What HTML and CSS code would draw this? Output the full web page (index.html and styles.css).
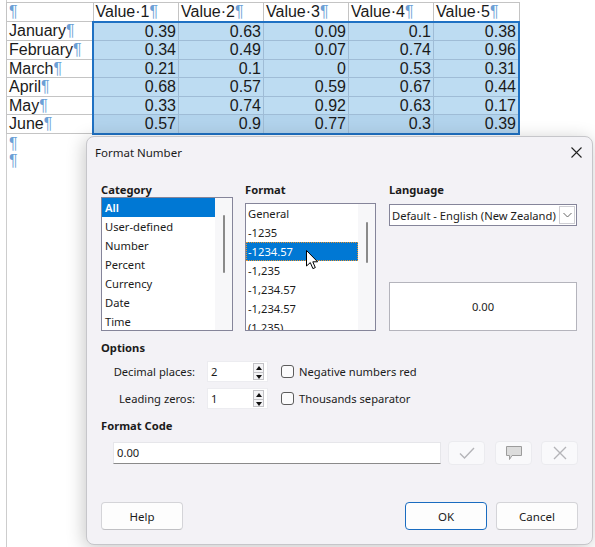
FILE: index.html
```html
<!DOCTYPE html>
<html lang="en">
<head>
    <meta charset="UTF-8">
    <title>Format Number</title>
    <link rel="stylesheet" href="styles.css">
</head>
<body>

<div class="page">
    <table class="sheet">
        <tr class="head">
            <td><span class="pm">¶</span></td>
            <td>Value·1<span class="pm">¶</span></td>
            <td>Value·2<span class="pm">¶</span></td>
            <td>Value·3<span class="pm">¶</span></td>
            <td>Value·4<span class="pm">¶</span></td>
            <td>Value·5<span class="pm">¶</span></td>
        </tr>
        <tr class="first">
            <td>January<span class="pm">¶</span></td>
            <td class="sel l">0.39</td><td class="sel">0.63</td><td class="sel">0.09</td><td class="sel">0.1</td><td class="sel r">0.38</td>
        </tr>
        <tr>
            <td>February<span class="pm">¶</span></td>
            <td class="sel l">0.34</td><td class="sel">0.49</td><td class="sel">0.07</td><td class="sel">0.74</td><td class="sel r">0.96</td>
        </tr>
        <tr>
            <td>March<span class="pm">¶</span></td>
            <td class="sel l">0.21</td><td class="sel">0.1</td><td class="sel">0</td><td class="sel">0.53</td><td class="sel r">0.31</td>
        </tr>
        <tr>
            <td>April<span class="pm">¶</span></td>
            <td class="sel l">0.68</td><td class="sel">0.57</td><td class="sel">0.59</td><td class="sel">0.67</td><td class="sel r">0.44</td>
        </tr>
        <tr>
            <td>May<span class="pm">¶</span></td>
            <td class="sel l">0.33</td><td class="sel">0.74</td><td class="sel">0.92</td><td class="sel">0.63</td><td class="sel r">0.17</td>
        </tr>
        <tr class="last">
            <td>June<span class="pm">¶</span></td>
            <td class="sel l">0.57</td><td class="sel">0.9</td><td class="sel">0.77</td><td class="sel">0.3</td><td class="sel r">0.39</td>
        </tr>
    </table>
    <p class="para pm">¶</p>
    <p class="para pm">¶</p>
</div>

<div class="dialog">
    <div class="titlebar">
        <span>Format Number</span>
        <svg class="close" width="11" height="11" viewBox="0 0 11 11"><path d="M0.5 0.5 L10.5 10.5 M10.5 0.5 L0.5 10.5" stroke="#222" stroke-width="1.1" fill="none"/></svg>
    </div>

    <div class="body">
        <div class="top">
            <div class="col">
                <div class="label">Category</div>
                <div class="listbox cat">
                    <div class="items">
                        <div class="item current">All</div>
                        <div class="item">User-defined</div>
                        <div class="item">Number</div>
                        <div class="item">Percent</div>
                        <div class="item">Currency</div>
                        <div class="item">Date</div>
                        <div class="item">Time</div>
                    </div>
                    <div class="track"><div class="thumb cat-thumb"></div></div>
                </div>
            </div>
            <div class="col">
                <div class="label">Format</div>
                <div class="listbox fmt">
                    <div class="items">
                        <div class="item">General</div>
                        <div class="item">-1235</div>
                        <div class="item current focus">-1234.57</div>
                        <div class="item">-1,235</div>
                        <div class="item">-1,234.57</div>
                        <div class="item">-1,234.57</div>
                        <div class="item">(1,235)</div>
                    </div>
                    <div class="track"><div class="thumb fmt-thumb"></div></div>
                </div>
            </div>
            <div class="col">
                <div class="label">Language</div>
                <div class="combo">
                    <span>Default - English (New Zealand)</span>
                    <span class="drop">
                        <svg width="9" height="6" viewBox="0 0 9 6"><path d="M0.5 1 L4.5 5 L8.5 1" stroke="#666" stroke-width="1" fill="none"/></svg>
                    </span>
                </div>
                <div class="preview">0.00</div>
            </div>
        </div>

        <div class="label section">Options</div>
        <div class="options">
            <div class="opt-name">Decimal places:</div>
            <div class="spin">
                <span>2</span>
                <span class="arrows"><span class="up"></span><span class="down"></span></span>
            </div>
            <label class="check"><span class="box"></span>Negative numbers red</label>

            <div class="opt-name">Leading zeros:</div>
            <div class="spin">
                <span>1</span>
                <span class="arrows"><span class="up"></span><span class="down"></span></span>
            </div>
            <label class="check"><span class="box"></span>Thousands separator</label>
        </div>

        <div class="label section">Format Code</div>
        <div class="code-row">
            <div class="code-input">0.00</div>
            <div class="tool">
                <svg width="16" height="12" viewBox="0 0 16 12"><path d="M1 6.5 L5.5 11 L15 1" stroke="#b4b4b8" stroke-width="1.4" fill="none"/></svg>
            </div>
            <div class="tool">
                <svg width="18" height="16" viewBox="0 0 18 16"><path d="M1.5 1.5 H16.5 V10.5 H7 L4.5 14.5 V10.5 H1.5 Z" fill="#dcdcdc" stroke="#9c9c9c" stroke-width="1"/></svg>
            </div>
            <div class="tool">
                <svg width="14" height="14" viewBox="0 0 14 14"><path d="M1 1 L13 13 M13 1 L1 13" stroke="#b4b4b8" stroke-width="1.4" fill="none"/></svg>
            </div>
        </div>

        <div class="footer">
            <button class="btn">Help</button>
            <span class="spacer"></span>
            <button class="btn ok">OK</button>
            <button class="btn">Cancel</button>
        </div>
    </div>
</div>

<svg class="pointer" width="13" height="20" viewBox="0 0 13 20">
    <path d="M0.5 0.5 L0.5 16 L4.3 12.6 L6.9 18.6 L9.3 17.6 L6.8 11.8 L11.6 11.8 Z" fill="#fff" stroke="#000" stroke-width="1"/>
</svg>

</body>
</html>
```

FILE: styles.css
```css
html, body {
    margin: 0;
    padding: 0;
    height: 100%;
    overflow: hidden;
    background: #fff;
}

body {
    position: relative;
    font-family: "Liberation Sans", Arial, sans-serif;
    color: #1a1a1a;
}

.page {
    margin-left: 6px;
    padding-top: 2px;
    border-left: 1px solid #cdcdcd;
    height: 545px;
}

.pm {
    color: #6c9fd6;
}

/* spreadsheet-like table */
.sheet {
    border-collapse: collapse;
    font-size: 16px;
    margin-left: -1px;
}

.sheet td {
    border: 1px solid #c4c4c4;
    height: 17.5px;
    line-height: 17.5px;
    padding: 0 0 0 2px;
    white-space: nowrap;
    width: 82px;
}

.sheet td:first-child {
    width: 83px;
}

.sheet td.sel {
    background: #bddcf2;
    border-color: #9fbcd6;
    text-align: right;
    padding: 0 2px 0 0;
}

.sheet tr.first td.sel { border-top: 2px solid #1f71c3; }
.sheet tr.last td.sel { border-bottom: 2px solid #1f71c3; background: #b2d3ec; }
.sheet td.sel.l { border-left: 2px solid #1f71c3; }
.sheet td.sel.r { border-right: 2px solid #1f71c3; }

.para {
    margin: 0;
    padding-left: 2px;
    font-size: 16px;
    line-height: 17px;
}

/* dialog */
.dialog {
    position: absolute;
    left: 86px;
    top: 136px;
    width: 507px;
    height: 409px;
    box-sizing: border-box;
    border: 1px solid #c6c6ca;
    border-radius: 8px;
    background: #f3f2f6;
    box-shadow: -2px 3px 18px rgba(0, 0, 0, 0.22);
    display: flex;
    flex-direction: column;
    font-family: "Noto Sans", "Open Sans", sans-serif;
    font-size: 11.2px;
    color: #1b1b1b;
}

.titlebar {
    height: 30px;
    display: flex;
    align-items: center;
    justify-content: space-between;
    padding: 0 10px 0 8px;
    font-size: 11.5px;
}

.body {
    flex: 1;
    display: flex;
    flex-direction: column;
    padding: 0 14px 14px 14px;
}

.label {
    font-weight: bold;
    height: 15px;
    line-height: 15px;
}

.top {
    margin-top: 15px;
    display: grid;
    grid-template-columns: 132px 131px 189px;
    column-gap: 12px;
}

.top .col:nth-child(3) { margin-left: 1px; }

.col {
    display: flex;
    flex-direction: column;
}

.listbox {
    display: flex;
    box-sizing: border-box;
    border: 1px solid #85859a;
    background: #fff;
    overflow: hidden;
}

.listbox.cat { height: 134px; }
.listbox.fmt { height: 128px; margin-top: 6px; }

.items {
    flex: 1;
}

.item {
    height: 19px;
    line-height: 19px;
    padding-left: 3px;
    white-space: nowrap;
}

.fmt .item { padding-left: 2px; }

.item.current {
    background: #0078d4;
    color: #fff;
}

.cat .item.current {
    font-weight: 600;
}

.item.focus {
    outline: 1px dotted #e8932e;
    outline-offset: -1px;
}

.track {
    width: 17px;
    background: #f7f7f9;
    position: relative;
}

.thumb {
    position: absolute;
    left: 8px;
    width: 2px;
    border-radius: 1px;
    background: #8a8a8a;
}

.cat-thumb { top: 17px; height: 58px; }
.fmt-thumb { top: 18px; height: 41px; }

.combo {
    margin-top: 7px;
    height: 22px;
    box-sizing: border-box;
    border: 1px solid #85859a;
    background: #fff;
    display: flex;
    align-items: center;
    justify-content: space-between;
    padding-left: 2px;
    white-space: nowrap;
}

.drop {
    width: 16px;
    height: 18px;
    margin-right: 1px;
    box-sizing: border-box;
    border: 1px solid #cfcfd4;
    display: flex;
    align-items: center;
    justify-content: center;
}

.preview {
    margin-top: auto;
    height: 49px;
    box-sizing: border-box;
    border: 1px solid #b4b4bc;
    background: #fff;
    display: flex;
    align-items: center;
    justify-content: center;
}

.section {
    margin-top: 9px;
}

.options {
    margin-top: 6px;
    display: grid;
    grid-template-columns: 94px 61px auto;
    column-gap: 12px;
    row-gap: 6px;
    align-items: center;
}

.opt-name {
    text-align: right;
}

.spin {
    height: 21px;
    box-sizing: border-box;
    background: #fff;
    border: 1px solid #ececf0;
    display: flex;
    align-items: center;
    justify-content: space-between;
    padding-left: 3px;
}

.arrows {
    display: flex;
    flex-direction: column;
    margin-right: 3px;
}

.arrows span {
    width: 11px;
    height: 8px;
    box-sizing: border-box;
    border: 1px solid #c2c2c6;
    background: #f4f4f6;
    position: relative;
}

.arrows .up { border-bottom: none; height: 9px; }

.arrows .up::after, .arrows .down::after {
    content: "";
    position: absolute;
    left: 2px;
    border-left: 3px solid transparent;
    border-right: 3px solid transparent;
}

.arrows .up::after { top: 2px; border-bottom: 4px solid #111; }
.arrows .down::after { top: 2px; border-top: 4px solid #111; }

.check {
    display: flex;
    align-items: center;
    margin-left: 1px;
}

.check .box {
    width: 13px;
    height: 13px;
    box-sizing: border-box;
    border: 1px solid #5c5c5c;
    border-radius: 3px;
    background: #fbfbfc;
    margin-right: 5px;
}

.code-row {
    margin-top: 8px;
    display: flex;
    align-items: center;
}

.code-input {
    margin-left: 12px;
    width: 328px;
    height: 22px;
    box-sizing: border-box;
    background: #fff;
    border: 1px solid #e6e6ea;
    border-bottom-color: #8a8a8a;
    padding-left: 3px;
    line-height: 20px;
}

.tool {
    width: 37px;
    height: 24px;
    box-sizing: border-box;
    margin-left: 9px;
    background: #f9f9fb;
    border: 1px solid #ebebef;
    border-radius: 4px;
    display: flex;
    align-items: center;
    justify-content: center;
}

.code-row .tool:nth-child(2) { margin-left: 7px; }
.code-row .tool:nth-child(3) { margin-left: 10px; }

.footer {
    margin-top: auto;
    display: flex;
}

.spacer { flex: 1; }

.btn {
    width: 82px;
    height: 28px;
    box-sizing: border-box;
    font-family: "Noto Sans", "Open Sans", sans-serif;
    font-size: 11.5px;
    color: #1b1b1b;
    background: #fdfdfd;
    border: 1px solid #d4d4d8;
    border-bottom-color: #c0c0c4;
    border-radius: 4px;
    padding: 0;
}

.btn.ok {
    border: 1px solid #1a6cc0;
    margin-right: 9px;
}

.pointer {
    position: absolute;
    left: 306px;
    top: 250px;
}
```
